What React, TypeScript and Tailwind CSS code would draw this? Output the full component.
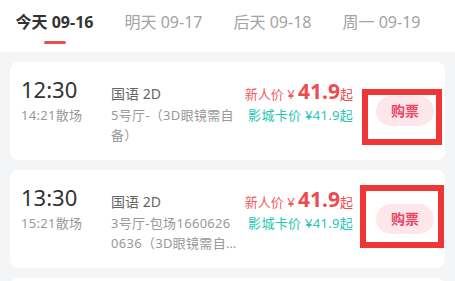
import React from "react"

const tabs = [
  { label: "今天 09-16", active: true },
  { label: "明天 09-17", active: false },
  { label: "后天 09-18", active: false },
  { label: "周一 09-19", active: false },
]

const shows = [
  {
    start: "12:30",
    end: "14:21散场",
    lang: "国语 2D",
    hall: "5号厅-（3D眼镜需自备）",
    box: "left-[352px] top-[27px] w-[80px] h-[56px]",
  },
  {
    start: "13:30",
    end: "15:21散场",
    lang: "国语 2D",
    hall: "3号厅-包场16606260636（3D眼镜需自备）",
    box: "left-[350px] top-[15px] w-[84px] h-[63px]",
  },
  {
    start: "14:30",
    end: "16:21散场",
    lang: "国语 2D",
    hall: "5号厅-（3D眼镜需自备）",
    box: "",
  },
]

function ShowCard({ show }: { show: (typeof shows)[number] }) {
  return (
    <div className="relative flex items-center bg-white rounded-[8px] pl-[11px] pr-[11px] pt-[14px] pb-[15px] shrink-0">
      {/* time */}
      <div className="w-[90px] shrink-0 self-start">
        <div className="text-[22px] leading-[26px] text-[#333]">{show.start}</div>
        <div className="text-[13px] leading-[20px] text-[#999] mt-[3px] tracking-[0.3px]">{show.end}</div>
      </div>

      {/* info + price */}
      <div className="flex-1 min-w-0 self-start">
        <div className="flex items-baseline justify-between h-[26px]">
          <span className="text-[14px] text-[#666]">{show.lang}</span>
          <span className="text-[#f04a4f] whitespace-nowrap">
            <span className="text-[13px] text-[#ef5c60]">新人价 ¥ </span>
            <span className="text-[21px] font-bold">41.9</span>
            <span className="text-[13px]">起</span>
          </span>
        </div>
        <div className="flex items-start justify-between mt-[3px]">
          <span className="w-[126px] text-[13px] leading-[20px] tracking-[0.3px] text-[#999] line-clamp-2 break-all">
            {show.hall}
          </span>
          <span className="text-[13px] leading-[20px] tracking-[0.3px] text-[#26c6b4] whitespace-nowrap">
            影城卡价 ¥41.9起
          </span>
        </div>
      </div>

      {/* buy */}
      <button className="ml-[23px] w-[58px] h-[30px] shrink-0 rounded-full bg-[#fde7ea] text-[14px] font-bold text-[#ec4467]">
        购票
      </button>

      {show.box && (
        <div className={`absolute border-[6px] border-[#f03535] ${show.box}`} />
      )}
    </div>
  )
}

export default function App() {
  return (
    <div
      className="w-[455px] h-[281px] overflow-hidden bg-[#f4f5f7] flex flex-col"
      style={{ fontFamily: '"Noto Sans", "Noto Sans CJK SC", sans-serif' }}
    >
      <div className="h-[52px] bg-white flex shrink-0">
        {tabs.map((t) => (
          <div key={t.label} className="w-[109px] flex flex-col items-center pt-[11px]">
            <span
              className={
                t.active
                  ? "text-[16px] leading-[22px] font-bold text-[#333]"
                  : "text-[16px] leading-[22px] text-[#a3a3a3]"
              }
            >
              {t.label}
            </span>
            {t.active && <span className="mt-[8px] w-[22px] h-[3px] rounded-full bg-[#e94f4f]" />}
          </div>
        ))}
      </div>

      <div className="flex flex-col gap-[10px] px-[10px] pt-[10px]">
        {shows.map((s, i) => (
          <ShowCard key={i} show={s} />
        ))}
      </div>
    </div>
  )
}
